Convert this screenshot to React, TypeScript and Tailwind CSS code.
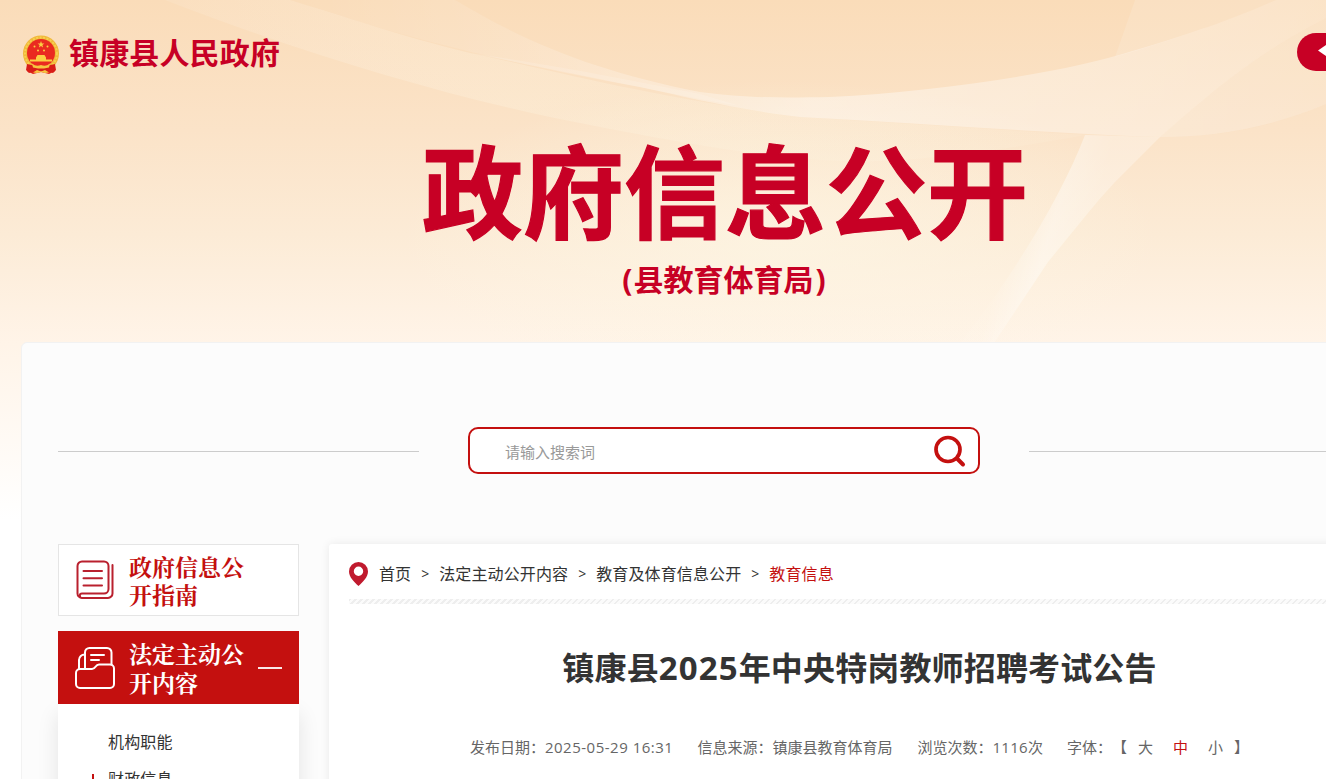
import React from 'react';

const crumbs = ['首页', '法定主动公开内容', '教育及体育信息公开'];

function Backdrop() {
  return (
    <svg className="absolute inset-0" width="1326" height="779" viewBox="0 0 1326 779" fill="none">
      <defs>
        <linearGradient id="sky" x1="0" y1="0" x2="0" y2="1">
          <stop offset="0" stopColor="#fadcb9" />
          <stop offset="0.25" stopColor="#fbe3c8" />
          <stop offset="0.45" stopColor="#fcebd6" />
          <stop offset="0.66" stopColor="#fff4e8" />
          <stop offset="1" stopColor="#ffffff" />
        </linearGradient>
        <linearGradient id="ribbon" x1="300" y1="0" x2="1326" y2="0" gradientUnits="userSpaceOnUse">
          <stop offset="0" stopColor="#fff" stopOpacity="0.02" />
          <stop offset="0.2" stopColor="#fff" stopOpacity="0.12" />
          <stop offset="0.5" stopColor="#fff" stopOpacity="0.4" />
          <stop offset="0.8" stopColor="#fff" stopOpacity="0.3" />
          <stop offset="1" stopColor="#fff" stopOpacity="0.22" />
        </linearGradient>
        <linearGradient id="band" x1="150" y1="0" x2="1090" y2="0" gradientUnits="userSpaceOnUse">
          <stop offset="0" stopColor="#fff" stopOpacity="0.08" />
          <stop offset="0.4" stopColor="#fdf5e2" stopOpacity="0.3" />
          <stop offset="1" stopColor="#fdf5e2" stopOpacity="0.12" />
        </linearGradient>
        <linearGradient id="strip" x1="1015" y1="230" x2="1080" y2="250" gradientUnits="userSpaceOnUse">
          <stop offset="0" stopColor="#fff" stopOpacity="0.05" />
          <stop offset="0.5" stopColor="#fff" stopOpacity="0.38" />
          <stop offset="1" stopColor="#fff" stopOpacity="0.28" />
        </linearGradient>
        <radialGradient id="glow">
          <stop offset="0" stopColor="#fdf6e4" stopOpacity="0.7" />
          <stop offset="1" stopColor="#fdf6e4" stopOpacity="0" />
        </radialGradient>
      </defs>
      <rect width="1326" height="520" fill="url(#sky)" />
      <ellipse cx="780" cy="240" rx="380" ry="160" fill="url(#glow)" />
      <path d="M165 0C320 60 470 103 600 127C720 150 800 163 880 161C960 157 1030 145 1085 135L800 117C640 95 560 72 470 53C400 36 340 15 290 0Z" fill="url(#band)" />
      <path d="M455 0C530 45 600 72 700 92C745 98 780 98 830 97C930 92 1040 76 1108 58C1180 38 1230 20 1276 0H1326V104C1270 128 1215 137 1160 137C1040 133 920 123 800 117C740 110 690 98 640 87C560 72 440 50 290 0Z" fill="url(#ribbon)" />
      <path d="M470 53C560 66 640 82 700 94L740 106C690 98 640 87 600 79Z" fill="#fff" opacity="0.14" />
      <path d="M1135 0H1276C1230 20 1180 38 1115 57Z" fill="#fff" opacity="0.13" />
      <path d="M1085 135L1160 137L1115 182Q1100 198 1088 213L1048 262L994 343H960C1010 280 1060 200 1085 135Z" fill="url(#strip)" />
      <path d="M1326 18C1260 52 1220 84 1160 137C1220 137 1270 128 1326 104Z" fill="#fad9b0" opacity="0.12" />
    </svg>
  );
}

function Emblem() {
  return (
    <svg width="38" height="40" viewBox="0 0 38 40">
      <path d="M7 29L5 36L11 39L19 37L27 39L33 36L31 29Z" fill="#e02418" />
      <circle cx="19" cy="18.5" r="18" fill="#f0b93a" />
      <circle cx="19" cy="18.5" r="16" fill="none" stroke="#f8cf50" strokeWidth="2" strokeDasharray="2 1.5" />
      <circle cx="19" cy="18" r="14" fill="#ea2a20" />
      <path d="M19 6l.9 2.4h2.5l-2 1.6.7 2.5-2.1-1.4-2.1 1.4.7-2.5-2-1.6h2.5Z" fill="#fbd044" />
      <g fill="#fbd044">
        <circle cx="12.5" cy="11.5" r="1" />
        <circle cx="25.5" cy="11.5" r="1" />
        <circle cx="16" cy="15.5" r="1" />
        <circle cx="22" cy="15.5" r="1" />
        <path d="M14 22.5l1.500-2.500h7l1.500 2.500v2h6v2H8v-2h6Z" />
      </g>
      <path d="M5 29l9 2h10l9-2 1 6-3 3-6-2h-12l-6 2-3-3Z" fill="#d81d18" />
      <path d="M10 28.500q4 3.500 9 1.500q5 2 9-1.500l-1 4-5 1h-6l-5-1ZM11 37.500l4-2.500 4 1.500 4-1.500 4 2.500-4 .5-4-1-4 1Z" fill="#f7c541" />
    </svg>
  );
}

function GuideIcon() {
  return (
    <svg className="-mt-0.5" width="38" height="39" viewBox="0 0 38 39" fill="none" stroke="#b9202e" strokeWidth="2" strokeLinecap="round" strokeLinejoin="round">
      <path d="M1.500 33.500V6a4.500 4.500 0 0 1 4.500-4.500h22A4.500 4.500 0 0 1 32.500 6v23a4.500 4.500 0 0 1-4.500 4.500H6a2.200 2.200 0 0 0 0 4.400h26a4.500 4.500 0 0 0 4.500-4.500V5M1.500 33.500a4.500 4.400 0 0 0 4.500 4.400" />
      <path d="M7.500 11h18.500M7.500 18.300h18.500M7.500 25.500h18.500" />
    </svg>
  );
}

function FolderIcon() {
  return (
    <svg width="40" height="42" viewBox="0 0 40 42" fill="none" stroke="#fff" strokeWidth="2" strokeLinecap="round" strokeLinejoin="round">
      <path d="M1 26a4 4 0 0 1 4-4h12c4 0 3-4.500 7-4.500h11a4 4 0 0 1 4 4V37a4 4 0 0 1-4 4H5a4 4 0 0 1-4-4Z" />
      <path d="M10 21.500V5.500A4.500 4.500 0 0 1 14.500 1H32a4.500 4.500 0 0 1 4.500 4.500v12M10 7.500a5.500 5.500 0 0 0-6 5.500v9" />
      <path d="M16 8h13M16 13h8" />
    </svg>
  );
}

export default function App() {
  return (
    <div className="relative h-[779px] w-[1326px] overflow-hidden bg-white font-['Open_Sans','Noto_Sans_CJK_SC',sans-serif] text-[#333]">
      <Backdrop />
      <div className="relative ml-[21px] w-[1406px]">
        <header className="h-[342px] text-[#c70025]">
          <div className="flex h-[104px] items-center justify-between">
            <div className="flex items-center pt-1 pl-px">
              <div className="pt-0.5"><Emblem /></div>
              <span className="ml-[9px] pb-0.5 text-[30px] leading-[40px] font-bold tracking-[0.15px]">镇康县人民政府</span>
            </div>
            <div className="flex h-[38px] w-[130px] items-center rounded-full bg-[#c70025] pl-[21px]">
              <svg width="16" height="22" viewBox="0 0 16 22" fill="#fff"><path d="M0 9.500L14 0V19Z" /></svg>
            </div>
          </div>
          <h1 className="h-[154px] pt-[21px] pl-0.5 text-center text-[101px] leading-[134px] font-bold [-webkit-text-stroke:1.2px_#c70025]">政府信息公开</h1>
          <p className="text-center text-[30px] leading-[44px] font-bold"><span className="mr-px">(</span>县教育体育局<span className="ml-0.5">)</span></p>
        </header>

        <div className="h-[460px] rounded-t-[6px] border border-[#f2f2f2] bg-[#fcfcfc] px-9 pt-[84px]">
          <div className="flex items-center gap-[49px]">
            <i className="mt-px h-px flex-1 bg-[#ccc]" />
            <div className="flex h-[47px] w-[512px] items-center justify-between rounded-[10px] border-2 border-[#c4100f] bg-white pr-3 pl-[35px]">
              <span className="pt-1 text-[15px] text-[#999]">请输入搜索词</span>
              <svg className="mt-0.5" width="33" height="33" viewBox="0 0 33 33" fill="none" stroke="#c4100f" strokeLinecap="round">
                <circle cx="15" cy="14.5" r="12" strokeWidth="3.700" />
                <path d="M24 23.500L30 29.500" strokeWidth="4" />
              </svg>
            </div>
            <i className="mt-px h-px flex-1 bg-[#ccc]" />
          </div>

          <div className="mt-[70px] flex items-start gap-[30px]">
            <aside className="w-[241px] shrink-0">
              <div className="flex h-[72px] items-center border border-[#e5e5e5] bg-white pl-[17px] text-[#c4100f]">
                <GuideIcon />
                <span className="ml-[15px] w-[120px] pt-[2px] font-['Noto_Serif_CJK_SC','Noto_Sans_CJK_SC',serif] text-[23px] leading-[28px] font-bold">政府信息公开指南</span>
              </div>
              <div className="mt-[15px]">
                <div className="relative z-10 flex h-[73px] items-center bg-[#c4100f] pl-[17px] text-white">
                  <FolderIcon />
                  <span className="ml-[14px] w-[120px] font-['Noto_Serif_CJK_SC','Noto_Sans_CJK_SC',serif] text-[23px] leading-[29px] font-bold">法定主动公开内容</span>
                  <i className="ml-[9px] h-0.5 w-6 bg-white/90" />
                </div>
                <ul className="h-[200px] bg-white pt-[20px] pl-[34px] text-base leading-[37px] tracking-[0.15px] shadow-[0_10px_20px_rgba(0,0,0,0.1)]">
                  <li className="pl-4">机构职能</li>
                  <li className="flex items-center"><i className="mr-[14px] h-3 w-0.5 bg-[#c4100f]" />财政信息</li>
                </ul>
              </div>
            </aside>

            <main className="h-[300px] flex-1 rounded-[3px] bg-white px-5 shadow-[0_0_10px_rgba(0,0,0,0.08)]">
              <nav className="flex h-[55px] items-center pt-[5px] text-base">
                <svg className="mr-[11px]" width="19" height="24" viewBox="0 0 19 24" fill="#c01a2e">
                  <path fillRule="evenodd" d="M9.500 0A9.500 9.500 0 0 0 0 9.500C0 15 5 20 9.500 24C14 20 19 15 19 9.500A9.500 9.500 0 0 0 9.500 0ZM9.500 4.500a4.700 4.700 0 1 1 0 9.400a4.700 4.700 0 0 1 0-9.400Z" />
                </svg>
                {crumbs.map((c) => (
                  <React.Fragment key={c}>
                    <span className="tracking-[0.12px]">{c}</span>
                    <span className="w-7 text-center text-sm">&gt;</span>
                  </React.Fragment>
                ))}
                <span className="tracking-[0.12px] text-[#c4100f]">教育信息</span>
              </nav>
              <div className="h-[5px] bg-[repeating-linear-gradient(135deg,#eeeeee_0_1.500px,#fbfbfb_1.500px_4.240px)]" />
              <h2 className="pt-[40px] text-center text-[32px] leading-[48px] font-bold tracking-[0.15px]">
                镇康县<span className="text-[33px] tracking-[1.1px]">2025</span>年中央特岗教师招聘考试公告
              </h2>
              <div className="flex justify-center pt-[43px] text-[15px] leading-[24px] text-[#666]">
                <span className="mr-6">发布日期：<span className="tracking-[0.5px]">2025-05-29 16:31</span></span>
                <span className="mr-[25px]">信息来源：镇康县教育体育局</span>
                <span className="mr-6">浏览次数：<span className="tracking-[0.3px]">1116</span>次</span>
                <span>字体：</span>
                <span>【</span>
                <span className="ml-[11px]">大</span>
                <span className="ml-5 text-[#c4100f]">中</span>
                <span className="ml-5">小</span>
                <span className="ml-[11px]">】</span>
              </div>
            </main>
          </div>
        </div>
      </div>
    </div>
  );
}
